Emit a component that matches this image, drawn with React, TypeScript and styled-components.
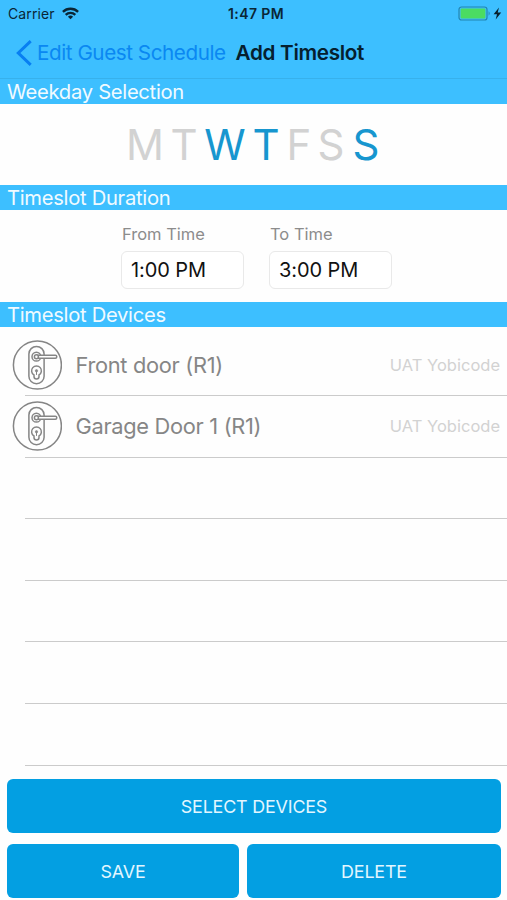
import React from "react";
import styled, { createGlobalStyle } from "styled-components";

const GlobalStyle = createGlobalStyle`
  * { box-sizing: border-box; }
  html, body { margin: 0; padding: 0; background: #fff; }
  body { font-family: Inter, "Liberation Sans", sans-serif; overflow: hidden; }
  button, input { font-family: inherit; }
`;

const Screen = styled.main`
  width: 507px;
  height: 900px;
  display: flex;
  flex-direction: column;
  background: #fefefe;
  white-space: nowrap;
`;

const TopBar = styled.header`
  height: 79px;
  flex: none;
  background: #3dbfff;
  border-bottom: 1px solid #37b1ec;
`;

const StatusBar = styled.div`
  height: 27px;
  display: grid;
  grid-template-columns: 1fr auto 1fr;
  align-items: center;
  padding: 0 3px 0 8px;
  color: #0a2636;
  font-size: 14px;
`;

const Carrier = styled.div`
  display: flex;
  align-items: center;
  gap: 7px;
  letter-spacing: 0.1px;
`;

const Clock = styled.div`
  font-weight: 600;
  font-size: 14px;
  letter-spacing: 0.4px;
`;

const Power = styled.div`
  display: flex;
  justify-content: flex-end;
  padding-bottom: 1px;
`;

const NavBar = styled.nav`
  height: 51px;
  display: flex;
  align-items: center;
  padding-left: 16px;
`;

const BackButton = styled.button`
  display: flex;
  align-items: center;
  gap: 5px;
  padding: 0;
  border: 0;
  background: none;
  color: #0a88f2;
  font-size: 20.7px;
  letter-spacing: -0.46px;
`;

const Title = styled.h1`
  margin: 0 0 0 10px;
  font-size: 20.7px;
  font-weight: 600;
  letter-spacing: -0.32px;
  color: #05202f;
`;

const SectionHeader = styled.h2`
  height: 25px;
  flex: none;
  margin: 0;
  padding-left: 7px;
  background: #3dbfff;
  color: #f0faff;
  font-size: 20.2px;
  font-weight: 400;
  letter-spacing: -0.29px;
  line-height: 26px;
`;

const Weekdays = styled.div`
  height: 81px;
  flex: none;
  display: flex;
  align-items: center;
  gap: 7px;
  padding-left: 126.5px;
`;

const Day = styled.span<{ $on: boolean; $width: number }>`
  width: ${(p) => p.$width}px;
  display: flex;
  justify-content: center;
  font-size: 42px;
  color: ${(p) => (p.$on ? "#1796cf" : "#d2d2d2")};
`;

const Duration = styled.div`
  height: 92px;
  flex: none;
  display: flex;
  gap: 25px;
  padding: 14px 0 0 121px;
`;

const Field = styled.label`
  width: 123px;
  display: flex;
  flex-direction: column;
  gap: 7px;
  color: #8c8c8c;
  font-size: 16.5px;
  line-height: 20px;
`;

const FieldLabel = styled.span`
  padding-left: 1px;
`;

const TimeBox = styled.span`
  height: 38px;
  border: 1px solid #e9e9e9;
  border-radius: 6px;
  padding-left: 9px;
  line-height: 36px;
  font-size: 20px;
  letter-spacing: -0.1px;
  color: #111;
  background: #fff;
`;

const DeviceList = styled.div`
  height: 439px;
  flex: none;
  display: grid;
  grid-template-rows: repeat(7, 61.6px);
  padding-top: 7.5px;
`;

const DeviceRow = styled.div`
  margin-left: 25px;
  border-bottom: 1px solid #cbcbcb;
  display: flex;
  align-items: center;
  padding: 0 7px 0 0;
`;

const DeviceIcon = styled.svg`
  flex: none;
  margin: 0 13.5px 0 -13px;
`;

const DeviceName = styled.span`
  flex: 1;
  font-size: 21.8px;
  letter-spacing: -0.3px;
  color: #868686;
`;

const Owner = styled.span`
  font-size: 16.5px;
  color: #d2d2d2;
`;

const Actions = styled.footer`
  display: grid;
  grid-template-columns: 232px 254px;
  grid-template-rows: 54px 54px;
  gap: 11px 8px;
  padding: 13px 0 0 7px;
`;

const ActionButton = styled.button<{ $wide?: boolean }>`
  grid-column: ${(p) => (p.$wide ? "1 / -1" : "auto")};
  border: 0;
  border-radius: 6px;
  padding: 0;
  background: #039fe2;
  color: #e2f6ff;
  font-size: 17.9px;
  letter-spacing: -0.18px;
`;

const days = [
  { label: "M", on: false, width: 37 },
  { label: "T", on: false, width: 27 },
  { label: "W", on: true, width: 41 },
  { label: "T", on: true, width: 27 },
  { label: "F", on: false, width: 25 },
  { label: "S", on: false, width: 25 },
  { label: "S", on: true, width: 31 },
];

const devices = [
  { name: "Front door (R1)", owner: "UAT Yobicode" },
  { name: "Garage Door 1 (R1)", owner: "UAT Yobicode" },
];

const emptyRows = [0, 1, 2, 3, 4];

function DoorLock() {
  return (
    <DeviceIcon width="50" height="50" viewBox="0 0 50 50" fill="none" stroke="#858585" strokeWidth="1.5">
      <circle cx="25.4" cy="25" r="24" />
      <rect x="16.9" y="6.4" width="15.2" height="37.4" rx="7.6" />
      <circle cx="24.4" cy="16.7" r="4.4" />
      <path d="M24.5 15.2h18.8a1.5 1.5 0 0 1 0 3H24.5" fill="#fefefe" />
      <circle cx="24.4" cy="16.7" r="2" fill="#fefefe" />
      <path d="M22 35a4.9 4.9 0 1 1 5 0v1.6a2.5 2.5 0 0 1-5 0z" />
      <circle cx="24.5" cy="30.8" r="1.2" fill="#858585" strokeWidth=".6" />
      <path d="M24.5 31.5v3.4" strokeWidth="1" />
    </DeviceIcon>
  );
}

function Wifi() {
  return (
    <svg width="17" height="13" viewBox="0 0 17 13" fill="none" stroke="currentColor" strokeWidth="2.3">
      <path d="M.9 4.9a10.8 10.8 0 0 1 15.2 0" />
      <path d="M3.7 7.9a6.8 6.8 0 0 1 9.6 0" />
      <path d="M8.5 12.2 5.9 9.7a3.7 3.7 0 0 1 5.2 0z" fill="currentColor" stroke="none" />
    </svg>
  );
}

function Battery() {
  return (
    <svg width="46" height="15" viewBox="0 0 46 15">
      <rect x="1" y="1" width="28" height="13" rx="2.6" fill="none" stroke="#2386b0" strokeWidth="1.2" />
      <rect x="2.6" y="2.6" width="24.8" height="9.8" rx="1" fill="#4bdc62" />
      <path d="M30.6 5.3q2.2 2.2 0 4.4z" fill="#2386b0" />
      <path d="M41 1.6 35.6 8.2h3.4l-1.3 5.4L43.2 6.6h-3.5z" fill="#08202e" />
    </svg>
  );
}

export default function App() {
  return (
    <>
      <GlobalStyle />
      <Screen>
        <TopBar>
          <StatusBar>
            <Carrier>Carrier<Wifi /></Carrier>
            <Clock>1:47 PM</Clock>
            <Power><Battery /></Power>
          </StatusBar>
          <NavBar>
            <BackButton>
              <svg width="16" height="26" viewBox="0 0 16 26" fill="none" stroke="#087ff2" strokeWidth="3">
                <path d="M14.7 1.2 2.3 13l12.4 11.8" />
              </svg>
              Edit Guest Schedule
            </BackButton>
            <Title>Add Timeslot</Title>
          </NavBar>
        </TopBar>
        <SectionHeader>Weekday Selection</SectionHeader>
        <Weekdays>
          {days.map((d, i) => (
            <Day key={i} $on={d.on} $width={d.width}>{d.label}</Day>
          ))}
        </Weekdays>
        <SectionHeader>Timeslot Duration</SectionHeader>
        <Duration>
          <Field><FieldLabel>From Time</FieldLabel><TimeBox>1:00 PM</TimeBox></Field>
          <Field><FieldLabel>To Time</FieldLabel><TimeBox>3:00 PM</TimeBox></Field>
        </Duration>
        <SectionHeader>Timeslot Devices</SectionHeader>
        <DeviceList>
          {devices.map((d) => (
            <DeviceRow key={d.name}>
              <DoorLock />
              <DeviceName>{d.name}</DeviceName>
              <Owner>{d.owner}</Owner>
            </DeviceRow>
          ))}
          {emptyRows.map((r) => <DeviceRow key={r} />)}
        </DeviceList>
        <Actions>
          <ActionButton $wide>SELECT DEVICES</ActionButton>
          <ActionButton>SAVE</ActionButton>
          <ActionButton>DELETE</ActionButton>
        </Actions>
      </Screen>
    </>
  );
}
